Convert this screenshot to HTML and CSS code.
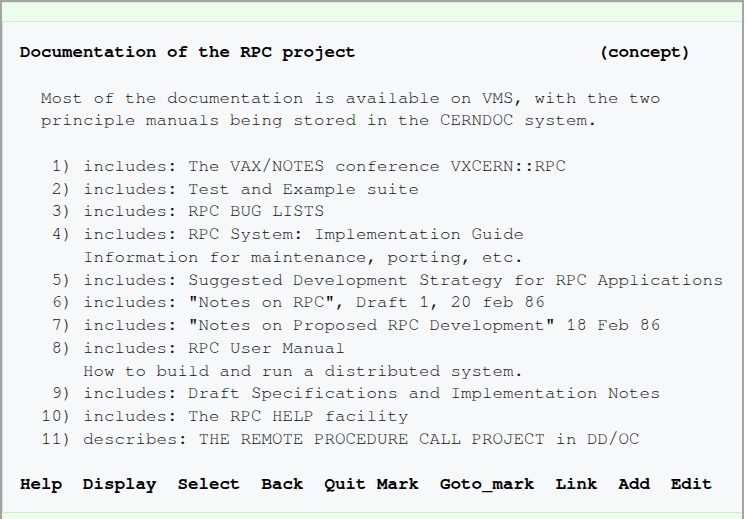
FILE: index.html
```html
<!DOCTYPE html>
<html lang="en">
<head>
<meta charset="utf-8">
<title>Documentation of the RPC project</title>
<link rel="stylesheet" href="styles.css">
</head>
<body>
<div class="frame">
  <div class="band band-top"></div>
  <main class="doc">
    <div class="title-row"><span>Documentation of the RPC project</span><span>(concept)</span></div>
    <p class="intro">Most of the documentation is available on VMS, with the two<br>principle manuals being stored in the CERNDOC system.</p>
    <ol class="links">
      <li><span class="num">1)</span><span class="txt">includes: The VAX/NOTES conference VXCERN::RPC</span></li>
      <li><span class="num">2)</span><span class="txt">includes: Test and Example suite</span></li>
      <li><span class="num">3)</span><span class="txt">includes: RPC BUG LISTS</span></li>
      <li><span class="num">4)</span><span class="txt">includes: RPC System: Implementation Guide<br>Information for maintenance, porting, etc.</span></li>
      <li><span class="num">5)</span><span class="txt">includes: Suggested Development Strategy for RPC Applications</span></li>
      <li><span class="num">6)</span><span class="txt">includes: "Notes on RPC", Draft 1, 20 feb 86</span></li>
      <li><span class="num">7)</span><span class="txt">includes: "Notes on Proposed RPC Development" 18 Feb 86</span></li>
      <li><span class="num">8)</span><span class="txt">includes: RPC User Manual<br>How to build and run a distributed system.</span></li>
      <li><span class="num">9)</span><span class="txt">includes: Draft Specifications and Implementation Notes</span></li>
      <li><span class="num">10)</span><span class="txt">includes: The RPC HELP facility</span></li>
      <li><span class="num">11)</span><span class="txt">describes: THE REMOTE PROCEDURE CALL PROJECT in DD/OC</span></li>
    </ol>
    <nav class="menu"><span>Help</span><span>Display</span><span>Select</span><span>Back</span><span class="tight">Quit Mark</span><span>Goto_mark</span><span>Link</span><span>Add</span><span>Edit</span></nav>
  </main>
  <div class="band band-bottom"></div>
</div>
</body>
</html>
```
FILE: styles.css
```css
html, body {
  margin: 0;
  padding: 0;
  background: #ffffff;
  overflow: hidden;
}

.frame {
  box-sizing: border-box;
  width: 744px;
  border: 2px solid #a4a4a4;
  border-bottom: none;
  background: #ffffff;
}

.band {
  background: #ebfdeb;
  border-top: 1px solid #dfe8df;
}

.band-top {
  height: 18px;
  border-bottom: 1px solid #dde3dd;
}

.band-bottom {
  height: 30px;
  border-top: 1px solid #dde3dd;
}

.doc {
  display: block;
  background: #f7f8fa;
  border-left: 1px solid #dcdcdc;
  padding: 19px 0 16px 17px;
  font-family: "Nimbus Mono PS", "Nimbus Mono L", "FreeMono", "Courier 10 Pitch", "Liberation Mono", monospace;
  font-size: 17.5px;
  line-height: 22.75px;
  color: #111111;
}

.title-row {
  display: flex;
  justify-content: space-between;
  width: 64ch;
  font-weight: bold;
  color: #000000;
  white-space: pre;
}

.intro {
  margin: 22.75px 0 22.75px 2ch;
  white-space: pre;
}

.links {
  list-style: none;
  margin: 0 0 22.75px 0;
  padding: 0;
}

.links li {
  display: flex;
  gap: 1ch;
  margin-left: 2ch;
}

.num {
  width: 3ch;
  text-align: right;
  flex: none;
}

.txt {
  white-space: pre;
}

.menu {
  display: flex;
  gap: 2ch;
  font-weight: bold;
  color: #000000;
  white-space: pre;
}
```
